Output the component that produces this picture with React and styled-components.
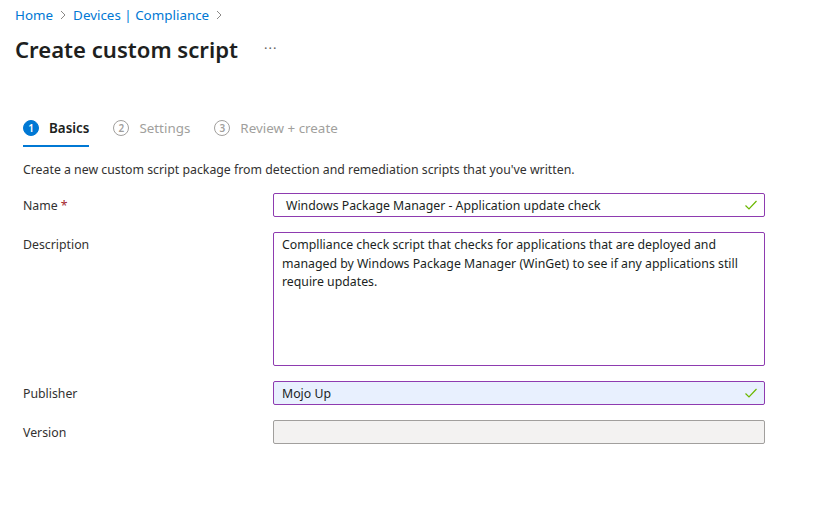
import React from 'react';
import styled, { createGlobalStyle } from 'styled-components';

const GlobalStyle = createGlobalStyle`
  body {
    margin: 0;
    background: #fff;
    font-family: 'Segoe UI', 'Noto Sans', sans-serif;
    color: #323130;
  }
`;

const Page = styled.div`
  width: 828px;
  height: 528px;
  padding: 4px 0 0 15px;
  box-sizing: border-box;
`;

const Crumbs = styled.nav`
  display: flex;
  align-items: center;
  height: 22px;
  font-size: 13.4px;
  color: #0078d4;

  .sep {
    color: #8a8886;
    margin: 0 6px;
    display: flex;
    align-items: center;
  }
`;

const TitleRow = styled.div`
  display: flex;
  align-items: center;
  height: 42px;
  margin-top: 2px;

  h1 {
    margin: 0;
    font-size: 22.1px;
    font-weight: 600;
    color: #201f1e;
  }

  .more {
    margin-left: 26px;
    color: #605e5c;
    font-size: 13px;
    letter-spacing: 1px;
    margin-top: -2px;
  }
`;

const Tabs = styled.div`
  display: flex;
  gap: 24px;
  margin: 43px 0 0 8px;
`;

const Tab = styled.div`
  display: flex;
  align-items: center;
  gap: 10px;
  height: 30px;
  padding-bottom: 2px;
  font-size: 13.4px;
  font-weight: ${p => (p.$active ? 600 : 400)};
  color: ${p => (p.$active ? '#201f1e' : '#a19f9d')};
  border-bottom: 2px solid ${p => (p.$active ? '#0078d4' : 'transparent')};
`;

const StepBadge = styled.span`
  width: 16px;
  height: 16px;
  border-radius: 50%;
  box-sizing: border-box;
  display: flex;
  align-items: center;
  justify-content: center;
  font-size: 10px;
  font-weight: 600;
  background: ${p => (p.$active ? '#0078d4' : '#fff')};
  color: ${p => (p.$active ? '#fff' : '#a19f9d')};
  border: 1px solid ${p => (p.$active ? '#0078d4' : '#a19f9d')};
`;

const Intro = styled.p`
  margin: 14px 0 0 8px;
  font-size: 12.3px;
  color: #323130;
`;

const Form = styled.div`
  display: grid;
  grid-template-columns: 250px 492px;
  row-gap: 15px;
  margin: 15px 0 0 8px;
`;

const Label = styled.div`
  font-size: 12.3px;
  color: #323130;
  padding-top: 4px;

  .req {
    color: #a4262c;
    margin-left: 3px;
  }
`;

const Field = styled.div`
  position: relative;
  box-sizing: border-box;
  height: ${p => p.$tall ? '134px' : '24px'};
  border: 1px solid ${p => (p.$focus ? '#8e3bb0' : '#a19f9d')};
  border-radius: 2px;
  background: ${p => p.$bg || '#fff'};
  padding: ${p => (p.$tall ? '3px 8px' : '0 12px')};
  display: flex;
  align-items: ${p => (p.$tall ? 'flex-start' : 'center')};
  font-size: 12.3px;
  line-height: ${p => (p.$tall ? '18.5px' : 'normal')};
  color: #201f1e;
  padding-left: ${p => p.$pl || (p.$tall ? '8px' : '12px')};
`;

const Check = styled.svg`
  position: absolute;
  right: 6px;
  top: 5px;
`;

const Chevron = () => (
  <svg width="8" height="10" viewBox="0 0 8 10">
    <path d="M2 1l4 4-4 4" fill="none" stroke="#8a8886" strokeWidth="1" />
  </svg>
);

const CheckMark = () => (
  <Check width="14" height="12" viewBox="0 0 14 12">
    <path d="M1.5 6.5l3.5 3.5 7.5-8" fill="none" stroke="#6bb700" strokeWidth="1.2" />
  </Check>
);

export default function App() {
  return (
    <Page>
      <GlobalStyle />
      <Crumbs>
        <span>Home</span>
        <span className="sep"><Chevron /></span>
        <span>Devices | Compliance</span>
        <span className="sep"><Chevron /></span>
      </Crumbs>
      <TitleRow>
        <h1>Create custom script</h1>
        <span className="more">···</span>
      </TitleRow>
      <Tabs>
        <Tab $active><StepBadge $active>1</StepBadge>Basics</Tab>
        <Tab><StepBadge>2</StepBadge>Settings</Tab>
        <Tab><StepBadge>3</StepBadge>Review + create</Tab>
      </Tabs>
      <Intro>Create a new custom script package from detection and remediation scripts that you've written.</Intro>
      <Form>
        <Label>Name<span className="req">*</span></Label>
        <Field $focus>
          Windows Package Manager - Application update check
          <CheckMark />
        </Field>
        <Label>Description</Label>
        <Field $focus $tall>
          Complliance check script that checks for applications that are deployed and managed by Windows Package Manager (WinGet) to see if any applications still require updates.
        </Field>
        <Label>Publisher</Label>
        <Field $focus $bg="#e8f0fe" $pl="8px">
          Mojo Up
          <CheckMark />
        </Field>
        <Label>Version</Label>
        <Field $bg="#f3f2f1" />
      </Form>
    </Page>
  );
}
